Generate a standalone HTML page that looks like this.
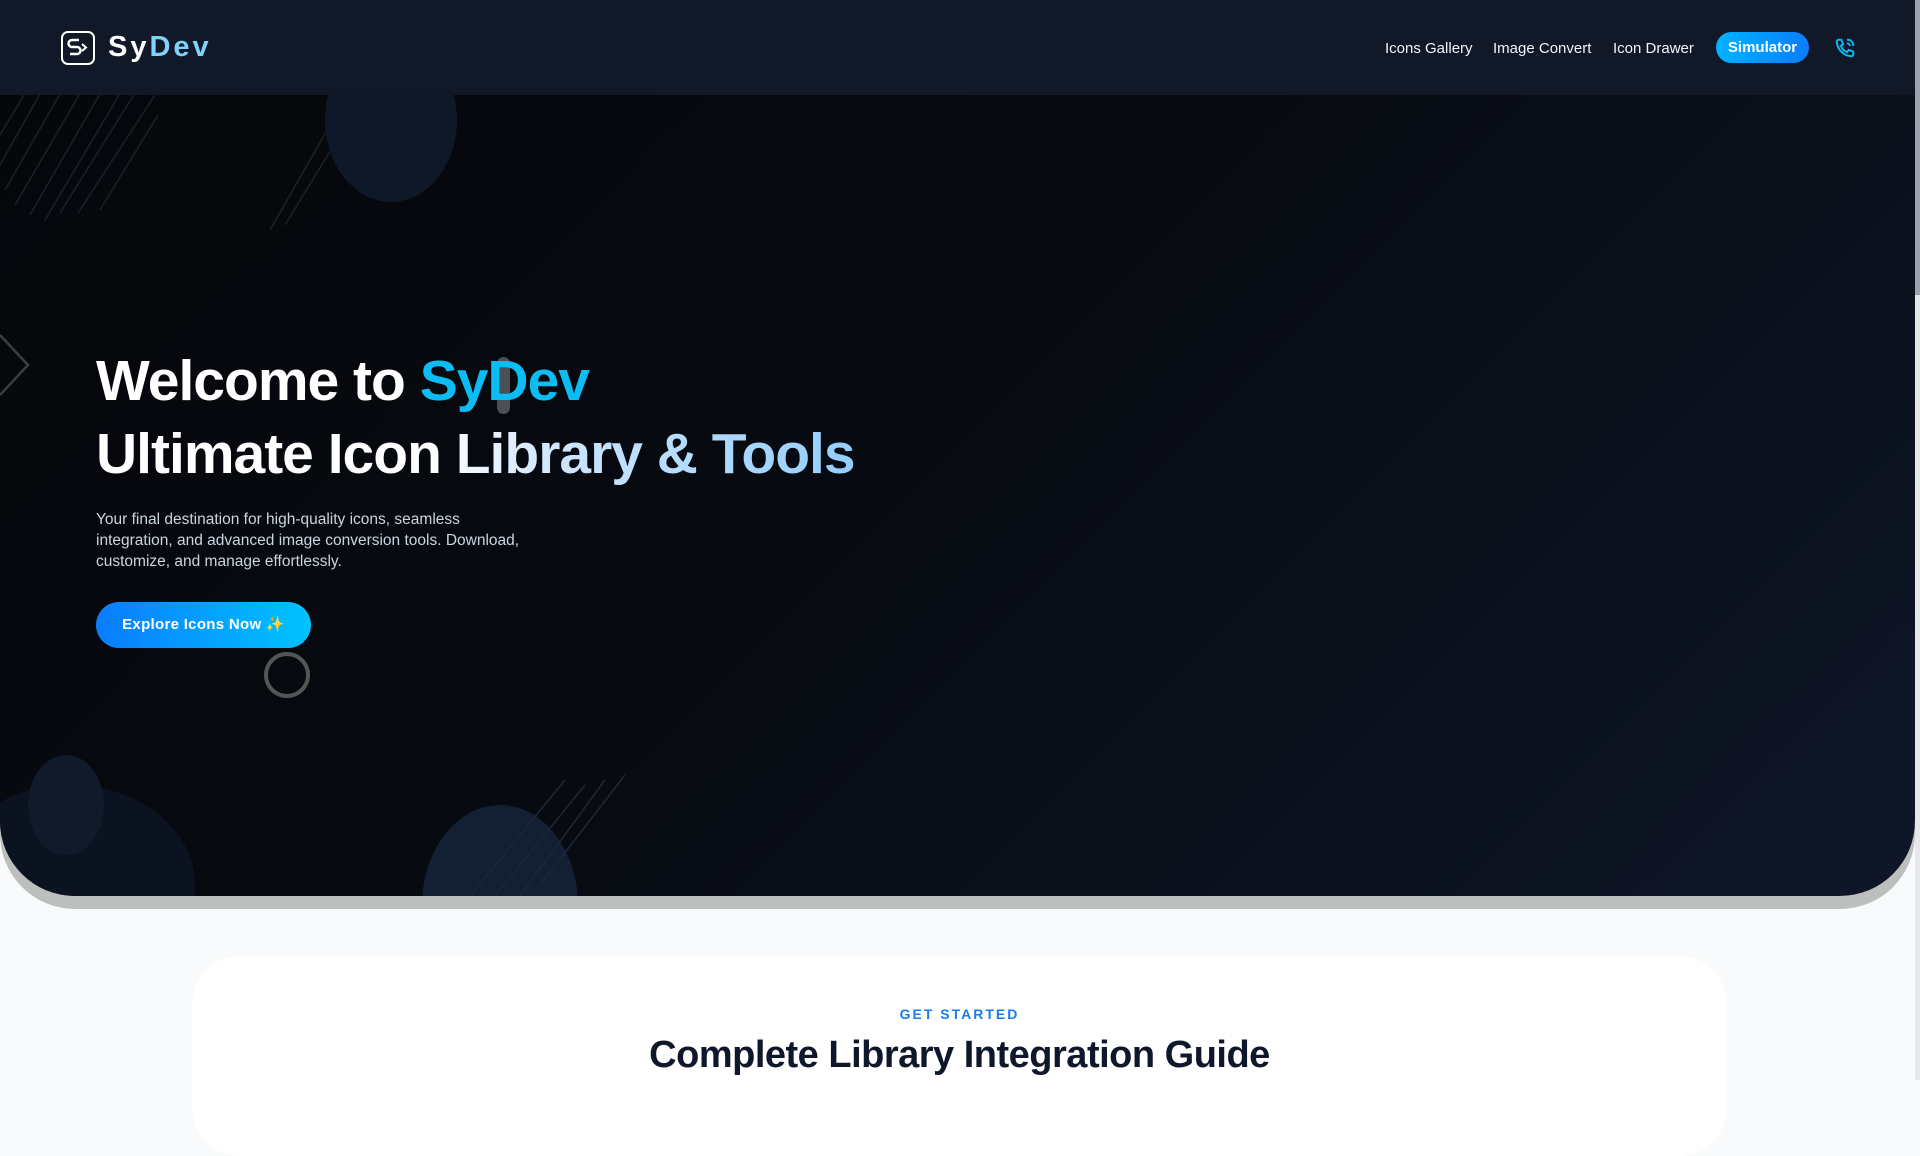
<!DOCTYPE html>
<html><head><meta charset="utf-8"><style>
*{margin:0;padding:0;box-sizing:border-box}
html,body{width:1920px;height:1080px;overflow:hidden;background:#f8fafc;font-family:"Liberation Sans",sans-serif}
.nav{position:absolute;left:0;top:0;width:1915px;height:95px;background:#111827;z-index:5}
.logo{position:absolute;left:61px;top:31px;width:34px;height:34px;border:2.5px solid #fff;border-radius:7px}
.brand{position:absolute;left:108px;top:31px;font-size:29px;font-weight:bold;letter-spacing:3px;color:#fff}
.brand span{color:#7dd3fc}
.links a{position:absolute;top:40px;font-size:15px;color:#f1f5f9;text-decoration:none}
.sim{position:absolute;left:1716px;top:32px;width:93px;height:31px;border-radius:16px;background:linear-gradient(90deg,#00b4ff,#0a7cff);color:#fff;font-size:15px;font-weight:bold;text-align:center;line-height:31px}
.hero{position:absolute;left:0;top:95px;width:1915px;height:801px;border-radius:0 0 75px 75px;background:linear-gradient(135deg,#05070b 0%,#070a10 45%,#0f1728 100%);overflow:hidden;box-shadow:0 13px 0 #bdbebe}
.h1{position:absolute;left:96px;font-size:57px;font-weight:bold;color:#fff;letter-spacing:-1px;white-space:nowrap}
.p{position:absolute;left:96px;top:414px;width:440px;font-size:15.5px;line-height:21px;color:#cbd5e1}
.btn{position:absolute;left:96px;top:507px;width:215px;height:46px;border-radius:23px;background:linear-gradient(90deg,#0a7cff,#00c3ff);color:#fff;font-weight:bold;font-size:15px;text-align:center;line-height:46px;letter-spacing:.3px}
.card{position:absolute;left:192px;top:956px;width:1535px;height:200px;background:#fff;border-radius:48px}
</style></head><body>
<div class="nav">
 <div class="logo"><svg width="29" height="29" viewBox="0 0 29 29" style="position:absolute;left:0;top:0"><path d="M16 7H9a3.5 3.5 0 0 0 0 7h5a3.5 3.5 0 0 1 0 7H7" fill="none" stroke="#fff" stroke-width="2.4"/><path d="M19 11l4 3.5-4 3.5" fill="none" stroke="#fff" stroke-width="2"/></svg></div>
 <div class="brand">Sy<span>Dev</span></div>
 <div class="links"><a style="left:1385px">Icons Gallery</a><a style="left:1493px">Image Convert</a><a style="left:1613px">Icon Drawer</a></div>
 <div class="sim">Simulator</div>
 <svg style="position:absolute;left:1834px;top:37px" width="22" height="22" viewBox="0 0 24 24" fill="none" stroke="#0ab4f0" stroke-width="2.2" stroke-linecap="round"><path d="M5 3h3l2 5-2.5 1.5a11 11 0 0 0 7 7L16 14l5 2v3a2 2 0 0 1-2 2A17 17 0 0 1 3 5a2 2 0 0 1 2-2z"/><path d="M15 3a6 6 0 0 1 6 6M15 7a2 2 0 0 1 2 2"/></svg>
</div>
<div style="position:absolute;right:0;top:0;width:5px;height:1080px;background:#e5e7eb"></div>
<div style="position:absolute;right:0;top:0;width:5px;height:295px;background:#9ca3af"></div>
<div class="hero">
 <svg style="position:absolute;left:0;top:0" width="700" height="801">
  <g stroke="#1c2027" stroke-width="1.5">
   <line x1="0" y1="40" x2="30" y2="-10"/><line x1="0" y1="70" x2="45" y2="-10"/><line x1="5" y1="95" x2="65" y2="-10"/><line x1="15" y1="110" x2="85" y2="-10"/><line x1="30" y1="120" x2="105" y2="-10"/><line x1="45" y1="125" x2="125" y2="-10"/><line x1="60" y1="118" x2="140" y2="-10"/><line x1="78" y1="118" x2="155" y2="0"/><line x1="100" y1="115" x2="158" y2="20"/>
   <line x1="270" y1="135" x2="330" y2="30"/><line x1="285" y1="130" x2="340" y2="40"/>
  </g>
  <polyline points="0,240 28,270 0,300" fill="none" stroke="#3a3d44" stroke-width="2.5"/>
  <ellipse cx="391" cy="25" rx="66" ry="82" fill="#0e1828"/>
  <ellipse cx="70" cy="790" rx="125" ry="100" fill="#0c1320"/>
  <ellipse cx="66" cy="710" rx="38" ry="50" fill="#101a2b"/>
  <ellipse cx="500" cy="810" rx="78" ry="100" fill="#131f33"/>
  <g stroke="#1e2635" stroke-width="1.5"><line x1="470" y1="801" x2="565" y2="685"/><line x1="495" y1="801" x2="585" y2="690"/><line x1="520" y1="801" x2="605" y2="685"/><line x1="540" y1="790" x2="625" y2="680"/></g>
  <rect x="497" y="262" width="13" height="57" rx="6.5" fill="#4b4f57"/>
  <circle cx="287" cy="580" r="21" fill="none" stroke="#555" stroke-width="4"/>
 </svg>
 <div class="h1" style="top:253px">Welcome to <span style="color:#0cbdf5">SyDev</span></div>
 <div class="h1" style="top:326px;background:linear-gradient(90deg,#fff 0%,#fff 45%,#cfe6ff 60%,#93cdfb 100%);-webkit-background-clip:text;color:transparent">Ultimate Icon Library &amp; Tools</div>
 <div class="p">Your final destination for high-quality icons, seamless integration, and advanced image conversion tools. Download, customize, and manage effortlessly.</div>
 <div class="btn">Explore Icons Now <span style="color:#fcd34d">✨</span></div>
</div>
<div class="card">
 <div style="position:absolute;left:0;width:100%;top:50px;text-align:center;color:#1a7cf0;font-size:14px;font-weight:bold;letter-spacing:2px">GET STARTED</div>
 <div style="position:absolute;left:0;width:100%;top:78px;text-align:center;color:#0f172a;font-size:38px;font-weight:bold;letter-spacing:-0.5px">Complete Library Integration Guide</div>
</div>
</body></html>
